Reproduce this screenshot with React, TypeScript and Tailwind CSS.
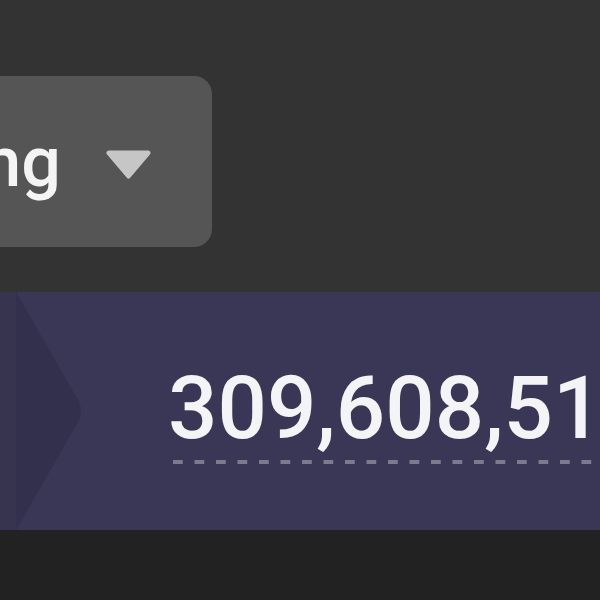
export default function App() {
  return (
    <div className="w-[600px] h-[600px] overflow-hidden bg-[#222222] font-['Roboto',sans-serif]">
      {/* Top area with sort dropdown */}
      <div className="h-[292px] bg-[#333333] pt-[76px]">
        <div className="-ml-[200px] w-[412px] h-[171px] rounded-[18px] bg-[#555555] flex items-center justify-end pr-[61px] overflow-hidden">
          <span className="whitespace-nowrap text-[70px] font-medium leading-none text-[#f4f4f4]">Trending</span>
          <svg className="ml-[45px] mt-[6px] shrink-0" width="45" height="29" viewBox="0 0 45 29">
            <polygon
              points="3,3 42,3 22.5,26"
              fill="#c6c6c6"
              stroke="#c6c6c6"
              strokeWidth="5"
              strokeLinejoin="round"
            />
          </svg>
        </div>
      </div>

      {/* Stat band */}
      <div className="h-[238px] bg-[#393656] flex">
        <svg className="shrink-0" width="84" height="238" viewBox="0 0 84 238">
          <rect x="0" y="0" width="16" height="238" fill="#37344f" />
          <path d="M16 0 L79 110 Q83 119 79 128 L16 238 Z" fill="#33304d" />
        </svg>
        <div className="ml-[84px] pt-[73px] flex flex-col">
          <span className="whitespace-nowrap text-[87px] font-medium leading-none text-[#f4f4f6]">309,608,512</span>
          <div className="mt-[8px] ml-[5px] h-[4px] w-[500px] bg-[linear-gradient(to_right,#7b7a8f_10px,transparent_10px)] bg-[length:21.5px_4px]" />
        </div>
      </div>
    </div>
  );
}
